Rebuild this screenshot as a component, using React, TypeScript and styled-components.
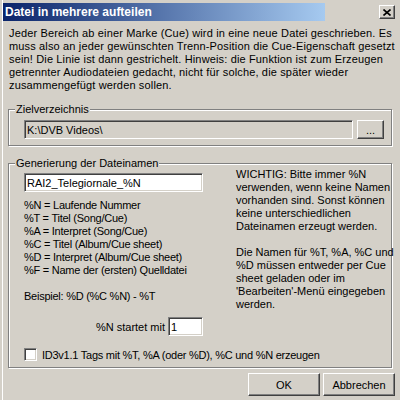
import styled, { createGlobalStyle } from "styled-components";

const GlobalStyle = createGlobalStyle`
  html, body {
    margin: 0;
    padding: 0;
    background: #d4d0c8;
  }
  body {
    font-family: "Liberation Sans", Arial, sans-serif;
    font-size: 11px;
    color: #000;
  }
`;

const raised = `
  box-sizing: border-box;
  background: #d4d0c8;
  border: 1px solid;
  border-color: #fff #404040 #404040 #fff;
  box-shadow: inset -1px -1px 0 #808080;
`;

const sunken = `
  box-sizing: border-box;
  border: 1px solid;
  border-color: #808080 #fff #fff #808080;
  box-shadow: inset 1px 1px 0 #404040, inset -1px -1px 0 #d4d0c8;
`;

const Window = styled.div`
  box-sizing: border-box;
  width: 398px;
  height: 400px;
  margin-left: 2px;
  border-left: 1px solid #fff;
  padding-top: 3px;
  display: flex;
  flex-direction: column;
  overflow: hidden;
`;

const TitleRow = styled.div`
  display: flex;
  height: 18px;
`;

const TitleBar = styled.div`
  width: 322px;
  height: 18px;
  padding-left: 2px;
  box-sizing: border-box;
  background: linear-gradient(90deg, #0a246a, #a6caf0);
  color: #fff;
  font-weight: bold;
  font-size: 12px;
  line-height: 18px;
  white-space: nowrap;
`;

const CloseButton = styled.div`
  ${raised}
  width: 16px;
  height: 14px;
  margin: 2px 5px 0 auto;
  display: flex;
  align-items: center;
  justify-content: center;
`;

const Intro = styled.div`
  margin: 6px 0 0 6px;
  line-height: 13px;
  letter-spacing: 0.15px;
  white-space: nowrap;
`;

const Group = styled.fieldset`
  box-sizing: border-box;
  width: 384px;
  min-width: 0;
  margin: 11px 0 0 5px;
  padding: 0;
  border: 1px solid #808080;
  box-shadow: inset 1px 1px 0 #fff, 1px 1px 0 #fff;
`;

const Legend = styled.legend`
  margin-left: 6px;
  padding: 0 1px;
  line-height: 13px;
  background: #d4d0c8;
  position: relative;
`;

const DirRow = styled.div`
  display: flex;
  gap: 4px;
  padding: 4px 0 6px 15px;
`;

const Field = styled.input<{ $w: number; $white?: boolean }>`
  ${sunken}
  width: ${p => p.$w}px;
  height: 19px;
  margin: 0;
  padding: 0 2px;
  font: inherit;
  color: #000;
  background: ${p => (p.$white ? "#fff" : "#d4d0c8")};
  outline: none;
`;

const PushButton = styled.div<{ $w: number; $h: number }>`
  ${raised}
  width: ${p => p.$w}px;
  height: ${p => p.$h}px;
  display: flex;
  align-items: center;
  justify-content: center;
`;

const NamesBody = styled.div`
  padding: 0 0 6px 15px;
`;

const Columns = styled.div`
  display: flex;
`;

const LeftCol = styled.div`
  width: 179px;
  padding-top: 3px;
`;

const Text = styled.div<{ $top?: number }>`
  margin-top: ${p => p.$top ?? 0}px;
  line-height: 13px;
  letter-spacing: -0.25px;
  white-space: nowrap;
`;

const StartRow = styled.div`
  display: flex;
  justify-content: flex-end;
  align-items: center;
  gap: 3px;
  margin-top: 14px;
`;

const RightCol = styled.div`
  margin: -2px 0 0 33px;
  line-height: 13px;
  white-space: nowrap;
`;

const CheckRow = styled.label`
  display: flex;
  align-items: center;
  gap: 5px;
  margin-top: 12px;
  letter-spacing: -0.25px;
`;

const CheckBox = styled.span`
  ${sunken}
  width: 13px;
  height: 13px;
  background: #fff;
`;

const ButtonRow = styled.div`
  display: flex;
  justify-content: flex-end;
  gap: 3px;
  margin: 5px 5px 0 0;
`;

export default function App() {
  return (
    <>
      <GlobalStyle />
      <Window>
        <TitleRow>
          <TitleBar>Datei in mehrere aufteilen</TitleBar>
          <CloseButton>
            <svg width="8" height="7" viewBox="0 0 8 7">
              <path d="M0.5 0.5 L7.5 6.5 M7.5 0.5 L0.5 6.5" stroke="#000" strokeWidth="1.6" />
            </svg>
          </CloseButton>
        </TitleRow>

        <Intro>
          Jeder Bereich ab einer Marke (Cue) wird in eine neue Datei geschrieben. Es<br />
          muss also an jeder gewünschten Trenn-Position die Cue-Eigenschaft gesetzt<br />
          sein! Die Linie ist dann gestrichelt. Hinweis: die Funktion ist zum Erzeugen<br />
          getrennter Audiodateien gedacht, nicht für solche, die später wieder<br />
          zusammengefügt werden sollen.
        </Intro>

        <Group>
          <Legend>Zielverzeichnis</Legend>
          <DirRow>
            <Field $w={329} value="K:\DVB Videos\" readOnly />
            <PushButton $w={27} $h={19}>...</PushButton>
          </DirRow>
        </Group>

        <Group>
          <Legend>Generierung der Dateinamen</Legend>
          <NamesBody>
            <Columns>
              <LeftCol>
                <Field $w={179} $white value="RAI2_Telegiornale_%N" readOnly />
                <Text $top={7}>
                  %N = Laufende Nummer<br />
                  %T = Titel (Song/Cue)<br />
                  %A = Interpret (Song/Cue)<br />
                  %C = Titel (Album/Cue sheet)<br />
                  %D = Interpret (Album/Cue sheet)<br />
                  %F = Name der (ersten) Quelldatei<br />
                  <br />
                  Beispiel: %D (%C %N) - %T
                </Text>
                <StartRow>
                  <span>%N startet mit</span>
                  <Field $w={35} $white value="1" readOnly />
                </StartRow>
              </LeftCol>
              <RightCol>
                WICHTIG: Bitte immer %N<br />
                verwenden, wenn keine Namen<br />
                vorhanden sind. Sonst können<br />
                keine unterschiedlichen<br />
                Dateinamen erzeugt werden.<br />
                <br />
                Die Namen für %T, %A, %C und<br />
                %D müssen entweder per Cue<br />
                sheet geladen oder im<br />
                'Bearbeiten'-Menü eingegeben<br />
                werden.
              </RightCol>
            </Columns>
            <CheckRow>
              <CheckBox />
              <span>ID3v1.1 Tags mit %T, %A (oder %D), %C und %N erzeugen</span>
            </CheckRow>
          </NamesBody>
        </Group>

        <ButtonRow>
          <PushButton $w={72} $h={23}>OK</PushButton>
          <PushButton $w={72} $h={23}>Abbrechen</PushButton>
        </ButtonRow>
      </Window>
    </>
  );
}
